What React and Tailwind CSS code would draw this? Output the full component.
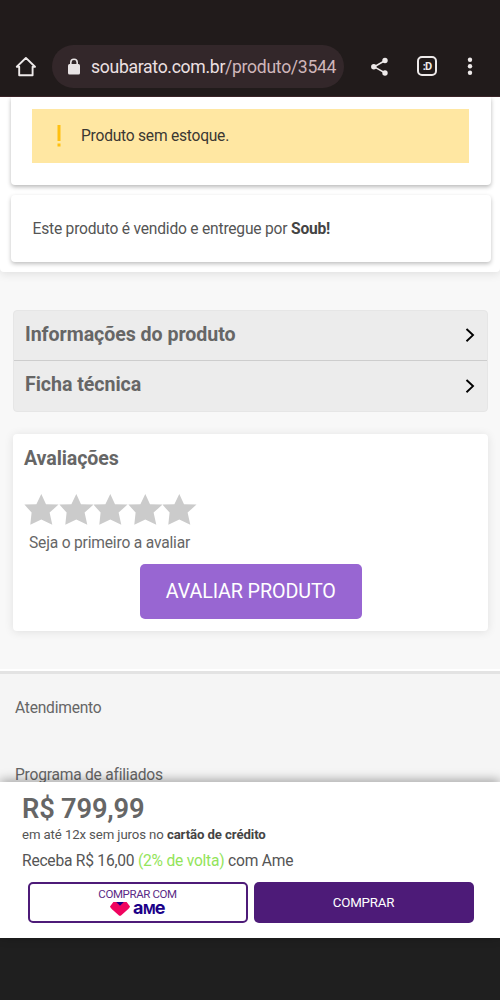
import React from 'react';

const SECTIONS = ['Informações do produto', 'Ficha técnica'];
const FOOTER_LINKS = ['Atendimento', 'Programa de afiliados'];

const BrowserBar = () => (
    <header className="h-[97px] shrink-0 bg-[#211b1b] pt-[45px] flex items-start border-b border-[#3a2428]">
        <svg className="ml-[15px] mt-[11px] w-[22px] h-[22px] shrink-0" viewBox="0 0 22 22" fill="none" stroke="#eeeaea" strokeWidth="1.9" strokeLinejoin="round">
            <path d="M1.8 10.8 L10.9 1.9 L20 10.8 H17.6 V19.2 H4.2 V10.8 Z" />
        </svg>
        <div className="ml-[15px] w-[292px] h-[43px] rounded-full bg-[#33272a] flex items-center">
            <svg className="ml-[15px] w-[14px] h-[18px] shrink-0" viewBox="0 0 14 18">
                <path d="M3.8 7 V4.4 a3.2 3.2 0 0 1 6.4 0 V7" fill="none" stroke="#e8e3e4" strokeWidth="1.6" />
                <rect x="1" y="6" width="12" height="10.5" rx="1.5" fill="#e8e3e4" />
            </svg>
            <div className="ml-[10px] w-[246px] overflow-hidden whitespace-nowrap text-[17.6px] tracking-[-0.3px] leading-6 text-[#ece0e2]">
                soubarato.com.br<span className="text-[#cfb6ba]">/produto/3544</span>
            </div>
        </div>
        <svg className="ml-[26px] mt-[12px] w-[20px] h-[20px] shrink-0" viewBox="0 0 20 20" fill="#eeeaea">
            <path d="M15.2 3.5 L4.2 9.8 L15.2 16" fill="none" stroke="#eeeaea" strokeWidth="1.5" />
            <circle cx="15" cy="3.5" r="2.7" />
            <circle cx="3.8" cy="9.8" r="2.7" />
            <circle cx="15" cy="16" r="2.7" />
        </svg>
        <div className="ml-[27px] mt-[11px] w-[20px] h-[20px] shrink-0 rounded-[5px] border-2 border-[#eeeaea] text-[#eeeaea] text-[11px] tracking-[-0.8px] leading-none font-bold flex items-center justify-center">:D</div>
        <svg className="ml-[30px] mt-[11px] w-[6px] h-[20px] shrink-0" viewBox="0 0 6 20" fill="#eeeaea">
            <circle cx="3" cy="3.8" r="2.2" />
            <circle cx="3" cy="10.3" r="2.2" />
            <circle cx="3" cy="16.8" r="2.2" />
        </svg>
    </header>
);

const StockPanel = () => (
    <section className="h-[175px] bg-white rounded-b-[4px] pl-[11px] pr-[9px] shadow-[0_2px_10px_rgba(0,0,0,0.1)]">
        <div className="h-[88px] rounded-b-[4px] pl-[21px] pr-[22px] pt-3 shadow-[0_2px_4px_rgba(0,0,0,0.28)]">
            <div className="h-[54px] bg-[#ffe7a2] flex items-center">
                <svg className="ml-[25px] w-[4px] h-[22px]" viewBox="0 0 4 22" fill="#ffc011">
                    <rect x="0.5" width="3" height="16" />
                    <rect x="0.5" y="18.5" width="3" height="3" />
                </svg>
                <p className="ml-[20px] text-[15.6px] leading-5 tracking-[-0.24px] text-[#3b3833]">Produto sem estoque.</p>
            </div>
        </div>
        <div className="mt-[10px] h-[67px] rounded-[4px] px-[21.5px] flex items-center shadow-[0_2px_4px_rgba(0,0,0,0.25)]">
            <p className="text-[15.6px] leading-5 tracking-[-0.21px] text-[#555]">Este produto é vendido e entregue por <strong className="text-[#444]">Soub!</strong></p>
        </div>
    </section>
);

const Accordion = () => (
    <section className="mt-[38px] ml-[12.5px] mr-[12px] h-[102px] rounded-[4px] bg-[#ececec] border border-[#e6e6e6] divide-y divide-[#cdcdcd]">
        {SECTIONS.map(title => (
            <button key={title} className="w-full h-[50px] flex items-center justify-between pl-[11.5px] pr-[12px] pb-[2px] text-[19.6px] tracking-[-0.05px] font-bold text-[#666]">
                {title}
                <svg className="w-[10px] h-[14px] mt-[1.5px]" viewBox="0 0 10 14" fill="none" stroke="#000" strokeWidth="1.9">
                    <path d="M1.5 1 L8 7.1 L1.5 13.2" />
                </svg>
            </button>
        ))}
    </section>
);

const Reviews = () => (
    <section className="mt-[21.5px] ml-[12.5px] mr-[12px] h-[197.5px] rounded-[4px] bg-white px-[11.5px] pt-[12px] shadow-[0_1px_10px_rgba(0,0,0,0.1)]">
        <h2 className="text-[19.6px] leading-[26px] tracking-[-0.1px] font-bold text-[#666]">Avaliações</h2>
        <div className="mt-[22.5px] flex">
            {[1, 2, 3, 4, 5].map(n => (
                <svg key={n} className="w-[34.5px] h-[31px] shrink-0" viewBox="0 0 34.5 31" fill="#cbcbcb">
                    <path d="M17.3 0 L22 10.2 L34.5 10.6 L25.6 18.6 L28.3 30.8 L17.3 25.6 L6.3 30.8 L7.6 18.6 L0.4 10.6 L12.4 10.2 Z" />
                </svg>
            ))}
        </div>
        <p className="ml-[5px] mt-[8px] text-[15.6px] leading-5 tracking-[-0.19px] text-[#666]">Seja o primeiro a avaliar</p>
        <button className="mt-[11px] ml-[116px] w-[221.5px] h-[55px] rounded-[5px] bg-[#9866d2] flex items-center justify-center text-[19.7px] tracking-[-0.1px] text-white">AVALIAR PRODUTO</button>
    </section>
);

const Footer = () => (
    <footer className="mt-[38px] border-t-2 border-white">
        <div className="border-t-[3px] border-[#e3e3e3] bg-[#f5f5f5] h-[110px] pl-[15px] pt-[24px] flex flex-col gap-[47px]">
            {FOOTER_LINKS.map(link => (
                <a key={link} className="text-[15.6px] leading-5 tracking-[-0.23px] text-[#666]">{link}</a>
            ))}
        </div>
    </footer>
);

const AmeLogo = () => (
    <span className="flex items-center h-[15px]">
        <svg className="w-[20px] h-[14px]" viewBox="0 0 20 14">
            <path d="M3.4 0 H16.6 L20 4.5 Q19.4 6 18 7.3 L11.3 13.2 Q10 14.3 8.7 13.2 L2 7.3 Q0.6 6 0 4.5 Z" fill="#f0045f" />
            <path d="M6.2 0 H13.8 L10 3.8 Z" fill="#1b0088" />
        </svg>
        <span className="ml-[3px] flex items-baseline font-['Inter'] font-bold leading-[14px] text-[18px] tracking-[-0.6px] text-[#1b0088]">
            a<span className="text-[13.5px]">M</span>e
        </span>
    </span>
);

const BuyBar = () => (
    <section className="relative h-[156px] shrink-0 bg-white pt-[11px] pl-[22px] text-[#555] shadow-[0_-2px_10px_rgba(0,0,0,0.35)]">
        <p className="text-[27.3px] leading-8 font-semibold tracking-[-0.2px] text-[#666]">R$ 799,99</p>
        <p className="mt-[1px] text-[13.2px] leading-[18px] tracking-[-0.1px]">em até 12x sem juros no <strong className="text-[#444]">cartão de crédito</strong></p>
        <p className="mt-[7px] text-[15.6px] leading-5 tracking-[-0.23px]">Receba R$ 16,00 <span className="text-[#93e45a]">(2% de volta)</span> com Ame</p>
        <div className="mt-[11px] ml-[5.5px] flex gap-[6px]">
            <button className="w-[220px] h-[41px] rounded-[5px] border-2 border-[#4d1b78] flex flex-col items-center pt-[4px] text-[11.5px] leading-[13px] tracking-[-0.4px] text-[#5b2a86]">
                COMPRAR COM
                <AmeLogo />
            </button>
            <button className="w-[220px] h-[41px] rounded-[5px] bg-[#4d1b78] text-[13.3px] tracking-[-0.2px] text-white">COMPRAR</button>
        </div>
    </section>
);

const App = () => (
    <div className="w-[500px] h-[1000px] overflow-hidden flex flex-col bg-[#1f1f1f] font-['Roboto',sans-serif]">
        <BrowserBar />
        <main className="h-[685px] shrink-0 overflow-hidden bg-[#f8f8f8]">
            <StockPanel />
            <Accordion />
            <Reviews />
            <Footer />
        </main>
        <BuyBar />
    </div>
);

export default App;
